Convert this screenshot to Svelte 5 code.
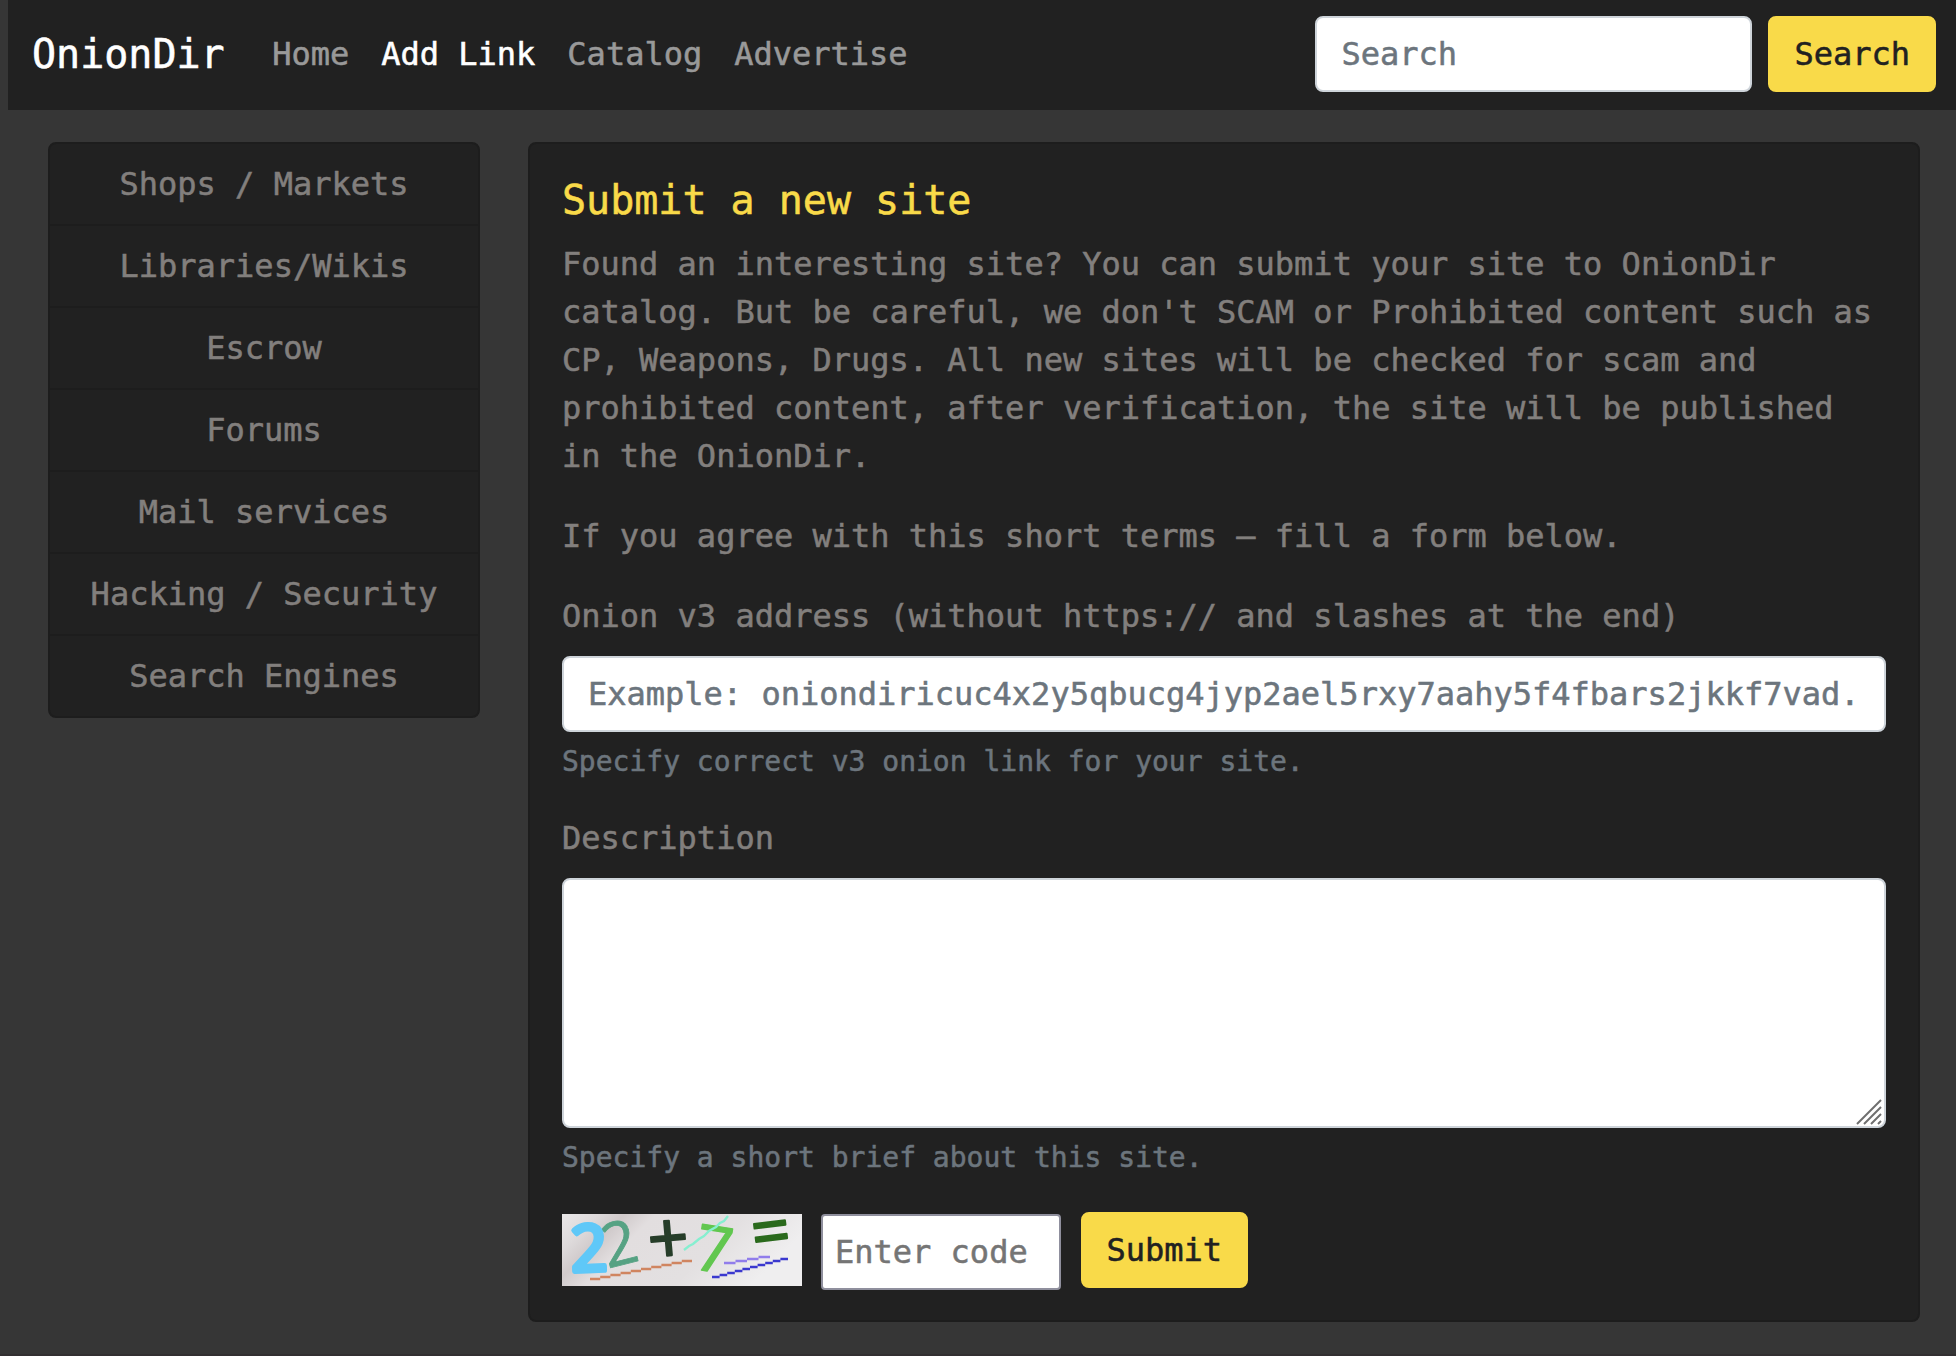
<script>
  const navLinks = ['Home', 'Add Link', 'Catalog', 'Advertise'];
  const categories = [
    'Shops / Markets',
    'Libraries/Wikis',
    'Escrow',
    'Forums',
    'Mail services',
    'Hacking / Security',
    'Search Engines',
  ];
  const active = 'Add Link';

  // A rising line made of flat dashes, each one 2px above the last.
  function steps(x, y, width, count) {
    const run = width / count;
    let d = '';
    for (let i = 0; i < count; i += 1) {
      d += `M${(x + i * run).toFixed(1)} ${y - i * 2}h${run.toFixed(1)}`;
    }
    return d;
  }
</script>

<div class="page">
  <nav class="navbar">
    <a class="brand" href="#home">OnionDir</a>
    <div class="links">
      {#each navLinks as link}
        <a href="#nav" class:active={link === active}>{link}</a>
      {/each}
    </div>
    <form class="search">
      <input class="control" type="text" placeholder="Search" />
      <button class="btn" type="button">Search</button>
    </form>
  </nav>

  <main class="columns">
    <aside class="list">
      {#each categories as category}
        <a href="#category">{category}</a>
      {/each}
    </aside>

    <section class="card">
      <h1>Submit a new site</h1>
      <p>
        Found an interesting site? You can submit your site to OnionDir catalog. But be careful, we
        don't SCAM or Prohibited content such as CP, Weapons, Drugs. All new sites will be checked for
        scam and prohibited content, after verification, the site will be published in the OnionDir.
      </p>
      <p>If you agree with this short terms — fill a form below.</p>

      <div class="group">
        <label for="address">Onion v3 address (without https:// and slashes at the end)</label>
        <input
          id="address"
          class="control"
          type="text"
          placeholder="Example: oniondiricuc4x2y5qbucg4jyp2ael5rxy7aahy5f4fbars2jkkf7vad.onion"
        />
        <small>Specify correct v3 onion link for your site.</small>
      </div>

      <div class="group second">
        <label for="description">Description</label>
        <div class="area">
          <textarea id="description" class="control"></textarea>
          <svg class="grip" width="26" height="26" viewBox="0 0 26 26" aria-hidden="true">
            <path d="M1 25 25 1M8 25 25 8M15 25 25 15M22 25 25 22" />
          </svg>
        </div>
        <small>Specify a short brief about this site.</small>
      </div>

      <div class="verify">
        <svg class="captcha" width="240" height="72" viewBox="0 0 240 72">
          <defs>
            <linearGradient id="paper" x1="0" y1="0" x2="1" y2="0.3">
              <stop offset="0" stop-color="#e9e7e8" />
              <stop offset="0.14" stop-color="#dedadb" />
              <stop offset="0.24" stop-color="#d0cacb" />
              <stop offset="0.36" stop-color="#e2dedf" />
              <stop offset="0.7" stop-color="#e3e0e1" />
              <stop offset="1" stop-color="#efeeef" />
            </linearGradient>
            <filter id="soft"><feGaussianBlur stdDeviation="0.6" /></filter>
          </defs>
          <rect width="240" height="72" fill="url(#paper)" />
          <g filter="url(#soft)">
            <text class="g2" transform="translate(57 29) rotate(-14)" y="22" font-size="61">2</text>
            <text class="b2" transform="translate(27 34) rotate(-2)" y="23" font-size="64">2</text>
            <text class="plus" transform="translate(106 24) rotate(-5)" y="25.5" font-size="72">+</text>
            <text class="seven" transform="translate(152 36) rotate(9)" y="22" font-size="64">7</text>
            <text class="eq" transform="translate(208.5 17) rotate(-7)" y="24" font-size="68">=</text>
          </g>
          <path d={steps(28, 65, 102, 10)} stroke="#d08560" />
          <path d="m122 36 5-4 4-2 6-5 5-3 5-5 7-4 4-4 4-2 4-5" stroke="#86efd0" />
          <path d={steps(162, 49, 46, 4)} stroke="#917deb" />
          <path d={steps(150, 63, 76, 10)} stroke="#3b38cf" />
        </svg>
        <input class="code" type="text" placeholder="Enter code" />
        <button class="btn" type="button">Submit</button>
      </div>
    </section>
  </main>
</div>

<style>
  :global(body) {
    background: #363636;
  }
  .page,
  .page * {
    box-sizing: border-box;
  }
  .page {
    min-height: 1356px;
    overflow: hidden;
    border-bottom: 2px solid #322f31;
    font: 32px/48px 'DejaVu Sans Mono', monospace;
    color: #827f7d;
    -webkit-text-stroke: 0.55px;
  }
  a {
    color: inherit;
    text-decoration: none;
  }
  .navbar {
    display: flex;
    align-items: center;
    height: 110px;
    margin-left: 8px;
    padding: 0 20px 2px 24px;
    background: #212121;
  }
  .brand {
    margin-right: 31.5px;
    font-size: 40px;
    color: #fff;
  }
  .links {
    display: flex;
    flex: 1;
  }
  .links a {
    padding: 0 16px;
    color: #999;
  }
  .links a.active {
    color: #fff;
  }
  .search {
    display: flex;
    gap: 16px;
  }
  .search .control {
    width: 437px;
  }
  input,
  textarea,
  button {
    display: block;
    margin: 0;
    font: inherit;
    outline: none;
  }
  .control {
    width: 100%;
    height: 76px;
    padding: 12px 24px;
    border: 2px solid #ced4da;
    border-radius: 8px;
    background: #fff;
    color: #495057;
  }
  .control::placeholder {
    color: #6c757d;
    opacity: 1;
  }
  .btn {
    height: 76px;
    padding: 12px 24px;
    border: 2px solid #f9da49;
    border-radius: 8px;
    background: #f9da49;
    color: #212121;
  }
  .columns {
    display: grid;
    grid-template-columns: 432px 1392px;
    gap: 48px;
    align-items: start;
    padding: 32px 0 0 48px;
  }
  .list,
  .card {
    border: 2px solid #1d1d1d;
    border-radius: 8px;
    background: #212121;
  }
  .list a {
    display: block;
    height: 82px;
    padding: 16px 0;
    border-bottom: 2px solid #1d1d1d;
    text-align: center;
  }
  .list a:last-child {
    height: 80px;
    border-bottom: 0;
  }
  .card {
    height: 1180px;
    padding: 32px;
  }
  h1 {
    margin: 0 0 16px;
    font-size: 40px;
    font-weight: 400;
    line-height: 48px;
    color: #f9da49;
  }
  p {
    margin: 0 0 32px;
  }
  label {
    display: block;
    margin-bottom: 16px;
  }
  small {
    display: block;
    margin-top: 9px;
    font-size: 28px;
    line-height: 42px;
    color: #6c757d;
  }
  .group {
    margin-bottom: 31px;
  }
  .group.second {
    margin-bottom: 35px;
  }
  .area {
    position: relative;
  }
  textarea.control {
    height: 250px;
    resize: none;
  }
  .grip {
    position: absolute;
    right: 4px;
    bottom: 3px;
    fill: none;
    stroke: #6f6f6f;
    stroke-width: 2;
  }
  .verify {
    display: flex;
    align-items: flex-start;
  }
  .captcha {
    margin-right: 19px;
    overflow: visible;
  }
  .captcha text {
    font-family: 'Open Sans', sans-serif;
    text-anchor: middle;
    stroke-linejoin: round;
    -webkit-text-stroke: 0;
  }
  .captcha path {
    fill: none;
    stroke-width: 2.3;
  }
  .captcha .b2 {
    fill: #5fc8f8;
    stroke: #5fc8f8;
    stroke-width: 5px;
  }
  .captcha .g2 {
    fill: #56a283;
    stroke: #56a283;
    stroke-width: 0.8px;
  }
  .captcha .plus {
    fill: #273d29;
    stroke: #273d29;
    stroke-width: 2px;
  }
  .captcha .seven {
    fill: #62c750;
    stroke: #62c750;
    stroke-width: 1.4px;
  }
  .captcha .eq {
    fill: #2c6a1f;
    stroke: #2c6a1f;
    stroke-width: 2px;
  }
  .code {
    width: 240px;
    height: 76px;
    margin-right: 19.5px;
    padding: 2px 12px;
    border: 2px solid #8f8f9d;
    border-radius: 4px;
    background: #fff;
  }
  .code::placeholder {
    color: #757575;
  }
  .verify .btn {
    width: 167px;
    margin-top: -2px;
  }
</style>
